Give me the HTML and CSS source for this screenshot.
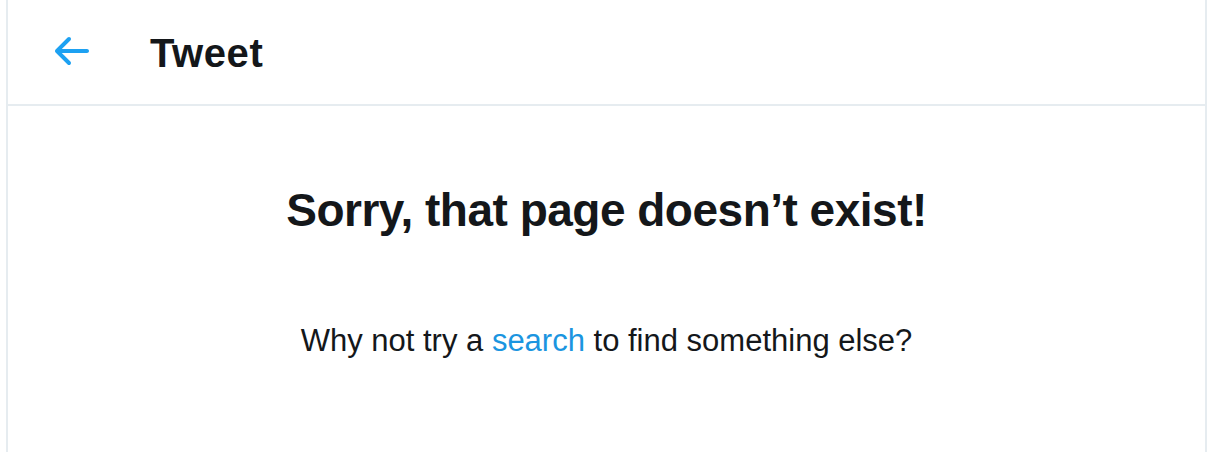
FILE: index.html
```html
<!DOCTYPE html>
<html lang="en">
<head>
<meta charset="utf-8">
<title>Tweet</title>
<link rel="stylesheet" href="styles.css">
</head>
<body>
<main class="column">
  <header class="topbar">
    <a class="back" href="#" aria-label="Back">
      <svg viewBox="0 0 24 24" class="back-icon"><path d="M20 11H7.414l4.293-4.293c.39-.39.39-1.023 0-1.414s-1.023-.39-1.414 0l-6 6c-.39.39-.39 1.023 0 1.414l6 6c.195.195.45.293.707.293s.512-.098.707-.293c.39-.39.39-1.023 0-1.414L7.414 13H20c.553 0 1-.447 1-1s-.447-1-1-1z"/></svg>
    </a>
    <h2 class="title">Tweet</h2>
  </header>
  <section class="empty">
    <h1 class="empty-title">Sorry, that page doesn’t exist!</h1>
    <p class="empty-text">Why not try a <a href="#" class="link">search</a> to find something else?</p>
  </section>
</main>
</body>
</html>
```
FILE: styles.css
```css
html, body {
  margin: 0;
  padding: 0;
  background: #ffffff;
}
body {
  font-family: "Liberation Sans", Arial, sans-serif;
  color: #14171a;
}
.column {
  margin-left: 6px;
  width: 1201px;
  min-height: 452px;
  box-sizing: border-box;
  border-left: 2px solid #e6ecf0;
  border-right: 2px solid #e6ecf0;
}
.topbar {
  height: 104px;
  box-sizing: content-box;
  border-bottom: 2px solid #e6ecf0;
  display: flex;
  align-items: center;
  padding-left: 39px;
}
.back {
  display: flex;
  width: 48px;
  height: 48px;
  margin-top: -2px;
}
.back-icon {
  width: 48px;
  height: 48px;
  fill: #1da1f2;
}
.title {
  margin: 2px 0 0 55px;
  font-size: 40px;
  line-height: 1.2;
  font-weight: 700;
  letter-spacing: 0.6px;
}
.empty {
  display: flex;
  flex-direction: column;
  align-items: center;
  padding-top: 77px;
}
.empty-title {
  margin: 0;
  font-size: 46px;
  line-height: 55px;
  font-weight: 700;
  letter-spacing: -0.5px;
}
.empty-text {
  margin: 85px 0 0;
  font-size: 31px;
  line-height: 36px;
}
.link {
  color: #1b95e0;
  text-decoration: none;
}
```
